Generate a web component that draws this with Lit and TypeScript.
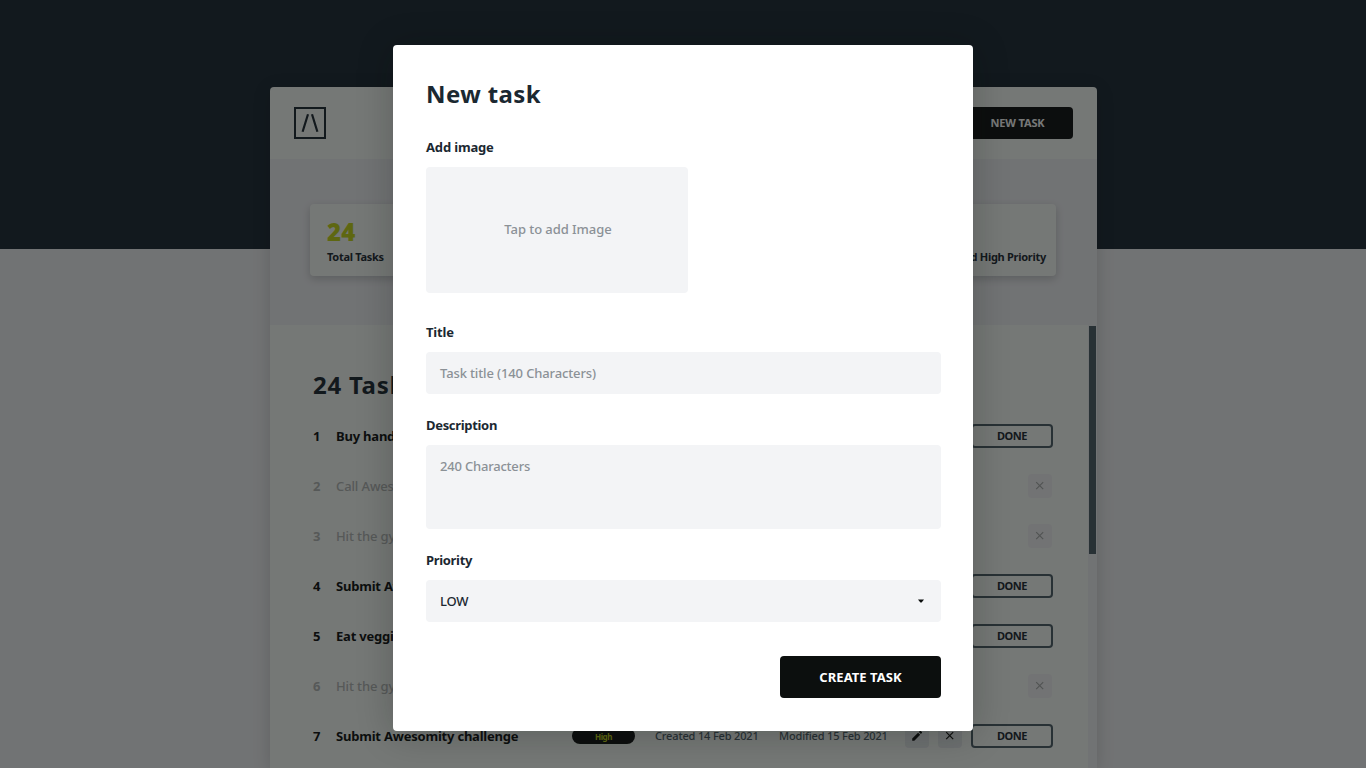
import { LitElement, html, css, svg, nothing } from 'lit';
import { customElement } from 'lit/decorators.js';
import { classMap } from 'lit/directives/class-map.js';

interface Task {
  title: string;
  done?: boolean;
  priority?: string;
  created?: string;
  modified?: string;
}

const TASKS: Task[] = [
  { title: 'Buy hand gel' },
  { title: 'Call Awesomity', done: true },
  { title: 'Hit the gym', done: true },
  { title: 'Submit Awesomity' },
  { title: 'Eat veggies' },
  { title: 'Hit the gym', done: true },
  {
    title: 'Submit Awesomity challenge',
    priority: 'High',
    created: 'Created 14 Feb 2021',
    modified: 'Modified 15 Feb 2021',
  },
];

const cross = svg`<path d="M1.2 1.2 8.2 8.2M8.2 1.2 1.2 8.2" stroke="currentColor" stroke-width="1.2" fill="none"/>`;

@customElement('task-board')
export class TaskBoard extends LitElement {
  static styles = css`
    :host { display: block; height: 681px; width: 827px; }
    * { box-sizing: border-box; }
    .board {
      height: 100%;
      background: #fbfefb;
      border-radius: 4px 4px 0 0;
      display: flex;
      flex-direction: column;
      overflow: hidden;
    }
    .wrap { height: 100%; border-radius: 4px 4px 0 0; box-shadow: 0 3px 18px rgba(12, 15, 14, 0.16); }
    header {
      flex: none;
      height: 72px;
      padding: 0 24px;
      display: flex;
      align-items: center;
      justify-content: space-between;
    }
    .logo { display: block; width: 32px; height: 32px; }
    .new {
      width: 110px;
      height: 32px;
      border-radius: 4px;
      background: #0c0f0e;
      color: #fff;
      display: grid;
      place-items: center;
      font-size: 11px;
      font-weight: 700;
      letter-spacing: -0.15px;
      padding: 0 1px 1px 0;
    }
    .stats {
      flex: none;
      height: 166px;
      background: #f2f3f6;
      padding: 45px 41px 49px 40px;
      display: grid;
      grid-template-columns: repeat(4, 1fr);
      gap: 22px;
    }
    .stat {
      background: #fbfefb;
      border-radius: 4px;
      box-shadow: 0 3px 8px rgba(12, 15, 14, 0.2);
      padding: 12px 10px 0 17px;
      white-space: nowrap;
    }
    .stat.last { display: flex; flex-direction: column; align-items: flex-end; }
    .value { font-size: 24px; font-weight: 900; line-height: 31px; color: #c6d816; letter-spacing: 0.3px; }
    .name { font-size: 11px; font-weight: 700; line-height: 20px; color: #1b2831; letter-spacing: -0.28px; }
    .body { flex: 1; min-height: 0; display: flex; justify-content: space-between; }
    .list { width: 740px; padding: 43px 0 0 43px; }
    h2 { margin: 0; font-size: 24px; line-height: 34px; font-weight: 700; color: #1b2831; letter-spacing: 0.75px; }
    .rows { padding-top: 9px; width: 740px; }
    .row { height: 50px; display: flex; align-items: center; font-size: 13px; color: #0c0f0e; white-space: nowrap; }
    .no { width: 23px; font-weight: 700; }
    .title { flex: 1; font-weight: 700; letter-spacing: -0.21px; }
    .row.done .no, .row.done .title { color: #b5b8b7; }
    .row.done .title { font-weight: 500; letter-spacing: -0.12px; }
    .pill {
      width: 63px; height: 16px; border-radius: 8px; background: #0c0f0e; color: #c6d816;
      font-size: 8px; font-weight: 700; display: grid; place-items: center; letter-spacing: -0.4px;
      margin-right: 20px;
    }
    .date { font-size: 11px; font-weight: 500; color: #4c5f68; letter-spacing: -0.16px; width: 124px; padding-bottom: 1px; }
    .date.mod { width: 126px; letter-spacing: -0.16px; }
    .icon { width: 24px; height: 24px; border-radius: 4px; background: #e9ecee; display: grid; place-items: center; margin-right: 9px; }
    .icon.off { margin-right: 1px; background: #f4f4f6; color: #a9acab; }
    .btn {
      width: 82px; height: 24px; border: 2px solid #4c5f68; border-radius: 4px; color: #1b2831;
      display: grid; place-items: center; font-size: 11px; font-weight: 700; letter-spacing: -0.45px;
      line-height: 18px;
    }
    .track { width: 9px; background: #f2f3f6; padding: 1px 1px 0; }
    .thumb { height: 228px; background: #4c5f68; }
  `;

  render() {
    return html`
      <div class="wrap"><div class="board">
        <header>
          <svg class="logo" viewBox="0 0 32 32" fill="none" stroke="#1b2831">
            <rect x="1" y="1" width="30" height="30" stroke-width="2" />
            <path d="M14 7.2 8.6 24.8M18 7.2 23.4 24.8" stroke-width="2.2" />
          </svg>
          <div class="new">NEW TASK</div>
        </header>
        <section class="stats">
          <div class="stat"><div class="value">24</div><div class="name">Total Tasks</div></div>
          <div class="stat"></div>
          <div class="stat"></div>
          <div class="stat last"><div class="value">&nbsp;</div><div class="name">Completed High Priority</div></div>
        </section>
        <section class="body">
          <div class="list">
            <h2>24 Tasks</h2>
            <div class="rows">${TASKS.map((t, i) => this.row(t, i + 1))}</div>
          </div>
          <div class="track"><div class="thumb"></div></div>
        </section>
      </div></div>
    `;
  }

  private row(t: Task, no: number) {
    return html`
      <div class=${classMap({ row: true, done: !!t.done })}>
        <span class="no">${no}</span>
        <span class="title">${t.title}</span>
        ${t.priority
          ? html`<span class="pill">${t.priority}</span>
              <span class="date">${t.created}</span>
              <span class="date mod">${t.modified}</span>
              <span class="icon"><svg width="12" height="12" viewBox="0 0 12 12" fill="#0c0f0e">
                <path d="M1.2 8.6 7.1 2.7 9.2 4.8 3.3 10.7H1.2zM7.8 2 8.8 1Q9.3.6 9.8 1L10.9 2.1Q11.3 2.6 10.9 3.1L9.9 4.1z" />
              </svg></span>
              <span class="icon"><svg width="9.4" height="9.4" viewBox="0 0 9.4 9.4">${cross}</svg></span>`
          : nothing}
        ${t.done
          ? html`<span class="icon off"><svg width="9.4" height="9.4" viewBox="0 0 9.4 9.4">${cross}</svg></span>`
          : html`<span class="btn">DONE</span>`}
      </div>
    `;
  }
}

@customElement('task-dialog')
export class TaskDialog extends LitElement {
  static styles = css`
    :host { display: block; }
    * { box-sizing: border-box; }
    .dialog {
      width: 580px;
      height: 686px;
      background: #fff;
      border-radius: 4px;
      box-shadow: 0 3px 36px rgba(12, 15, 14, 0.24);
      padding: 32px 32px 33px 33px;
      display: flex;
      flex-direction: column;
      color: #1b2831;
      font-size: 13px;
      line-height: 20px;
    }
    h1 { margin: 0 0 27px; font-size: 24px; line-height: 33px; font-weight: 700; letter-spacing: 0.4px; }
    label { font-weight: 700; margin-bottom: 10px; letter-spacing: -0.16px; }
    label.tight { letter-spacing: -0.32px; }
    .field {
      background: #f3f4f6;
      border-radius: 4px;
      padding: 11px 14px;
      height: 42px;
      color: #8b9196;
      font-weight: 500;
      letter-spacing: -0.13px;
    }
    .drop { width: 262px; height: 126px; display: grid; place-items: center; margin-bottom: 29px; padding: 10px 13px 12px 15px; letter-spacing: -0.06px; }
    .title { margin-bottom: 21px; }
    .area { height: 84px; margin-bottom: 21px; letter-spacing: -0.2px; }
    .select { color: #1b2831; display: flex; justify-content: space-between; align-items: center; margin-bottom: 34px; letter-spacing: -0.2px; }
    .caret { display: block; margin-right: 3px; }
    .create {
      align-self: flex-end;
      width: 161px;
      height: 42px;
      border-radius: 4px;
      background: #0c0f0e;
      color: #fff;
      font-weight: 700;
      display: grid;
      place-items: center;
      letter-spacing: 0.05px;
    }
  `;

  render() {
    return html`
      <div class="dialog">
        <h1>New task</h1>
        <label>Add image</label>
        <div class="field drop">Tap to add Image</div>
        <label>Title</label>
        <div class="field title">Task title (140 Characters)</div>
        <label class="tight">Description</label>
        <div class="field area">240 Characters</div>
        <label class="tight">Priority</label>
        <div class="field select">
          <span>LOW</span>
          <svg class="caret" width="6" height="4" viewBox="0 0 6 4"><path d="M0 .5H6L3.6 3.4H2.4z" fill="#0c0f0e" /></svg>
        </div>
        <div class="create">CREATE TASK</div>
      </div>
    `;
  }
}

@customElement('app-root')
export class AppRoot extends LitElement {
  static styles = css`
    :host { display: block; font-family: 'Noto Sans', sans-serif; }
    .page {
      position: relative;
      height: 768px;
      overflow: hidden;
      box-sizing: border-box;
      padding: 87px 0 0 270px;
      background: linear-gradient(#192732 249px, #f2f3f5 249px);
    }
    .overlay {
      position: absolute;
      inset: 0;
      display: flex;
      justify-content: center;
      align-items: flex-start;
      padding-top: 45px;
      background: rgba(12, 15, 14, 0.56);
    }
  `;

  render() {
    return html`
      <div class="page">
        <task-board></task-board>
        <div class="overlay"><task-dialog></task-dialog></div>
      </div>
    `;
  }
}
